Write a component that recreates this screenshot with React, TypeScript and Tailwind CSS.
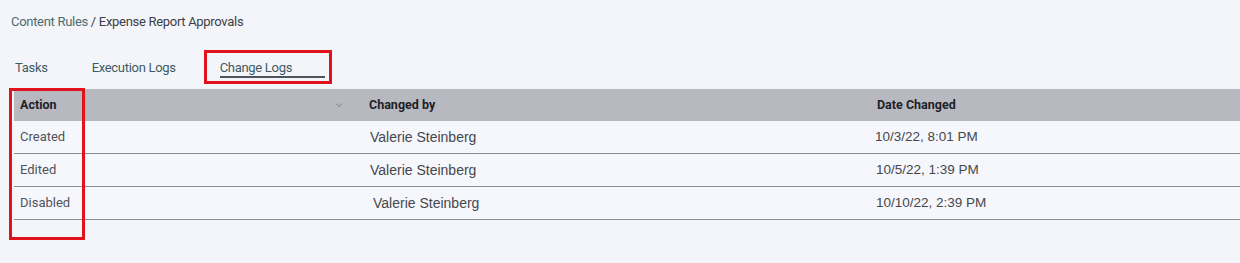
import React from 'react';

const rows = [
  { action: 'Created', by: 'Valerie Steinberg', date: '10/3/22, 8:01 PM', byPad: 'pl-[15px]', datePad: 'pl-[12px]' },
  { action: 'Edited', by: 'Valerie Steinberg', date: '10/5/22, 1:39 PM', byPad: 'pl-[15px]', datePad: 'pl-[13px]' },
  { action: 'Disabled', by: 'Valerie Steinberg', date: '10/10/22, 2:39 PM', byPad: 'pl-[18px]', datePad: 'pl-[13px]' },
];

export default function App() {
  return (
    <div className="relative w-[1240px] h-[263px] overflow-hidden bg-[#f4f5fa] font-['Roboto',sans-serif]">
      <div className="pl-[11px] pt-[13px] text-[13px] leading-[18px] tracking-[-0.3px]">
        <span className="text-[#4b6b70]">Content Rules</span>
        <span className="text-[#3c3f44]"> / Expense Report Approvals</span>
      </div>

      <div className="flex items-start h-[40px] mt-[18px] text-[13px] tracking-[-0.3px] text-[#3e5b63]">
        <div className="pl-[15px] pt-[9px]">Tasks</div>
        <div className="pl-[44px] pt-[9px]">Execution Logs</div>
        <div className="ml-[44px] pt-[9px] w-[105px] h-[29px] border-b-2 border-[#4a555c]">Change Logs</div>
      </div>

      <div className="ml-[14px]">
        <div className="grid grid-cols-[341px_508px_1fr] h-[32px] items-center bg-[#b8b9c0] text-[12.5px] font-bold text-[#1f2126]">
          <div className="flex items-center justify-between pl-[6px] pr-[12px]">
            <span>Action</span>
            <svg width="8" height="6" viewBox="0 0 8 6" className="text-[#7b7d85]">
              <path d="M1 1.5 L4 4.5 L7 1.5" fill="none" stroke="currentColor" strokeWidth="1" />
            </svg>
          </div>
          <div className="pl-[14px]">Changed by</div>
          <div className="pl-[14px]">Date Changed</div>
        </div>
        {rows.map((r) => (
          <div
            key={r.action}
            className="grid grid-cols-[341px_508px_1fr] h-[33px] items-center border-b border-[#8d8e95] bg-[#f6f7fc]"
          >
            <div className="pl-[6px] text-[13px] text-[#505359]">{r.action}</div>
            <div className={`${r.byPad} font-['Liberation_Sans',Arial,sans-serif] text-[14px] text-[#45474b]`}>{r.by}</div>
            <div className={`${r.datePad} font-['Liberation_Sans',Arial,sans-serif] text-[13.5px] text-[#45474b]`}>{r.date}</div>
          </div>
        ))}
      </div>

      <div className="absolute left-[204px] top-[50px] w-[128px] h-[34px] border-[3px] border-[#e1121c]" />
      <div className="absolute left-[9px] top-[88px] w-[76px] h-[152px] border-[3px] border-[#e1121c]" />
    </div>
  );
}
